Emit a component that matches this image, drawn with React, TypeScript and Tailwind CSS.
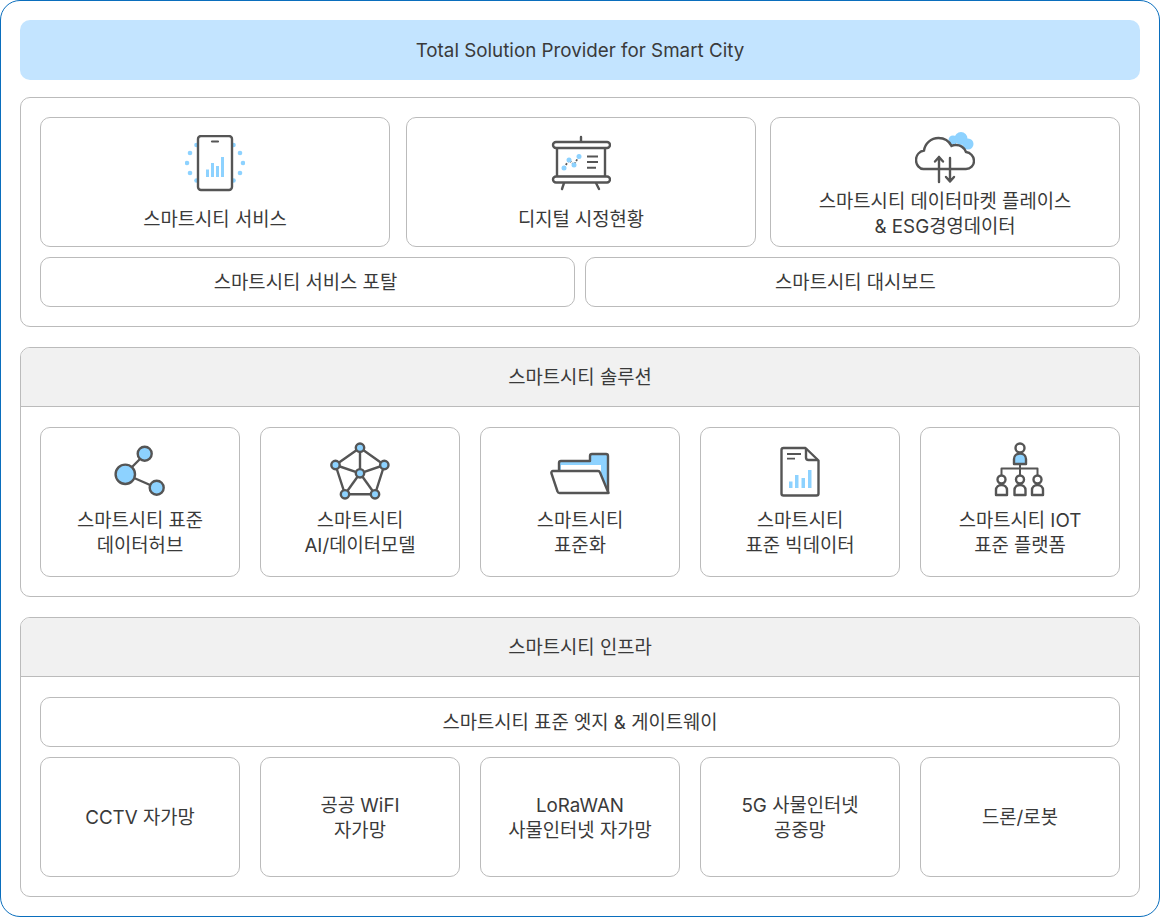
import React from "react";

const BLUE = "#8dd2ff";
const DARK = "#555555";

const PhoneIcon = () => (
  <svg viewBox="185 134 60 60" className="h-[60px] w-[60px]" fill="none">
    {[
      [196.5, 144],
      [190, 152],
      [187, 162],
      [190, 172],
      [196.5, 179.5],
      [233.5, 144],
      [240, 152],
      [243, 162],
      [240, 172],
      [233.5, 179.5],
    ].map(([cx, cy]) => (
      <circle key={`${cx}-${cy}`} cx={cx} cy={cy} r="2.3" fill={BLUE} />
    ))}
    <rect x="198" y="135" width="34" height="54" rx="3" fill="#fff" stroke={DARK} strokeWidth="2.4" />
    <path d="M212 140.5h6" stroke={DARK} strokeWidth="2.2" strokeLinecap="round" />
    <path d="M206 168.5h3V176h-3zM211 162h3v14h-3zM216 165h3v11h-3zM221 156h3v20h-3z" fill={BLUE} />
  </svg>
);

const BoardIcon = () => (
  <svg viewBox="551 134 60 60" className="h-[60px] w-[60px]" fill="none" stroke={DARK} strokeWidth="2.4">
    <path d="M581 136v5M564 182l-2 6M596 182l3 6" strokeLinecap="round" />
    <rect x="557" y="146" width="48" height="30" fill="#fff" />
    <rect x="553" y="141" width="57" height="6" rx="3" fill="#fff" />
    <rect x="553" y="175.5" width="57" height="6" rx="3" fill="#fff" />
    <path d="M564 167l5-8 5 5 5-9" strokeWidth="1.8" strokeDasharray="2 1.5" />
    <g fill={BLUE} stroke="none">
      <circle cx="564" cy="167" r="2.5" />
      <circle cx="569" cy="159" r="2.5" />
      <circle cx="574" cy="164" r="2.5" />
      <circle cx="579" cy="155.5" r="2.5" />
    </g>
    <path d="M587 155.5h11M587 161h11M587 166.7h9" strokeWidth="2" />
  </svg>
);

const CloudIcon = () => (
  <svg viewBox="915 129 60 60" className="h-[60px] w-[60px]" fill="none">
    <g fill={BLUE}>
      <circle cx="961" cy="138.5" r="6.5" />
      <circle cx="953" cy="140" r="4.5" />
      <circle cx="968" cy="144" r="5.5" />
    </g>
    <path
      d="M923 169h43c4.500 0 8-3.500 8-8s-3.500-8.500-8-9c-1.500-4.500-6-7.500-11-7-1.500 0-2.500.5-3.500 1-2.500-5-7.500-8-13-8-7.500 0-13.500 5.500-14.500 12.500-4.500 1-8 4.500-8 9.500 0 5 3.500 9 7.500 9z"
      fill="#fff"
      stroke={DARK}
      strokeWidth="2.4"
    />
    <path
      d="M939 182v-25M935 161.500l4-4.500 4 4.500M950 158v23.500M946 177l4 4.500 4-4.500"
      stroke={DARK}
      strokeWidth="2.4"
      strokeLinecap="round"
      strokeLinejoin="round"
    />
  </svg>
);

const ShareIcon = () => (
  <svg viewBox="110 442 60 60" className="h-[60px] w-[60px]" fill={BLUE} stroke={DARK} strokeWidth="2.4">
    <path d="M125 474l20-20M125 474l32 14" />
    <circle cx="125.300" cy="474.300" r="9.700" />
    <circle cx="144.700" cy="453.700" r="7" />
    <circle cx="156.700" cy="487.700" r="7" />
  </svg>
);

const NetworkIcon = () => {
  const center = [360, 473.3];
  const nodes = [
    [360, 447.7],
    [384.3, 465],
    [375, 494.3],
    [345, 494.3],
    [335.5, 465],
  ];
  return (
    <svg viewBox="330 442 60 60" className="h-[60px] w-[60px]" fill={BLUE} stroke={DARK} strokeWidth="2.4">
      <path d={`M${nodes.map((n) => n.join(" ")).join("L")}Z`} fill="none" />
      {nodes.map((n) => (
        <path key={n[0]} d={`M${center.join(" ")}L${n.join(" ")}`} fill="none" />
      ))}
      <circle cx={center[0]} cy={center[1]} r="4.200" />
      {nodes.map((n) => (
        <circle key={n[0]} cx={n[0]} cy={n[1]} r="4.200" />
      ))}
    </svg>
  );
};

const FolderIcon = () => (
  <svg viewBox="550 442 60 60" className="h-[60px] w-[60px]" fill="none" stroke={DARK} strokeWidth="2.4" strokeLinejoin="round">
    <path d="M559 472v-9c0-1.200.8-2 2-2h29v-5c0-1.200.8-2 2-2h14c1.200 0 2 .8 2 2v37h-49z" fill={BLUE} stroke="none" />
    <path d="M561 465h40v7h-40z" fill="#fff" stroke="none" />
    <path d="M559 471v-8c0-1.200.8-2 2-2h29v-5c0-1.200.8-2 2-2h14c1.200 0 2 .8 2 2v37" />
    <path d="M553 471h45c1 0 1.700.5 2 1.500l8.500 20.500h-49c-1 0-1.700-.5-2-1.500l-6-18c-.5-1.300.3-2.500 1.500-2.500z" fill="#fff" />
  </svg>
);

const DocIcon = () => (
  <svg viewBox="770 442 60 60" className="h-[60px] w-[60px]" fill="none" stroke={DARK} strokeWidth="2.4" strokeLinejoin="round">
    <path d="M783.500 448h22l13 12.500V493.500c0 1.200-.8 2-2 2h-33c-1.200 0-2-.8-2-2V450c0-1.200.8-2 2-2z" />
    <path d="M806 448.500v9c0 1.500.8 2.500 2.500 2.500h9.500" />
    <path d="M787 454h14M787 458.700h8" strokeWidth="1.800" />
    <path d="M789 481.500h3.500V488H789zM795 475h3.500v13H795zM801.500 478h3.500v10h-3.500zM808 470h3.500v18H808z" fill={BLUE} stroke="none" />
  </svg>
);

const PersonSmall = ({ x }: { x: number }) => (
  <g>
    <circle cx={x} cy="479.500" r="4" />
    <path d={`M${x - 5.500} 495v-5c0-3 2.500-5 5.500-5s5.500 2 5.500 5v5z`} />
  </g>
);

const TreeIcon = () => (
  <svg viewBox="990 442 60 60" className="h-[60px] w-[60px]" fill="none" stroke={DARK} strokeWidth="2.4" strokeLinejoin="round">
    <circle cx="1020" cy="448" r="4.500" />
    <path d="M1014 464v-5c0-3 2.500-5.500 6-5.500s6 2.500 6 5.500v5z" fill={BLUE} />
    <path d="M1020 464v4.500M1001.500 475v-6.500h36v6.500M1020 468.500v6.500" strokeWidth="2" />
    <PersonSmall x={1001.5} />
    <PersonSmall x={1020} />
    <PersonSmall x={1037.5} />
  </svg>
);

const Card = ({
  icon,
  lines,
  className,
}: {
  icon?: React.ReactNode;
  lines: string[];
  className: string;
}) => (
  <div className={`flex flex-col items-center justify-center rounded-[10px] border border-[#bbbbbb] text-center ${className}`}>
    {icon}
    <div>
      {lines.map((line) => (
        <p key={line}>{line}</p>
      ))}
    </div>
  </div>
);

const Header = ({ title }: { title: string }) => (
  <div className="flex h-[59px] items-center justify-center border-b border-[#bbbbbb] bg-[#f1f1f1]">{title}</div>
);

export default function App() {
  return (
    <div
      className="h-[917px] w-[1160px] overflow-hidden rounded-[20px] border border-[#0a6ebd] bg-white p-[19px] text-[18.8px] leading-[25px] text-[#3a3a3a]"
      style={{ fontFamily: 'Inter, "Noto Sans CJK KR", sans-serif' }}
    >
      <div className="flex h-[60px] items-center justify-center rounded-[10px] bg-[#c3e4ff]">
        Total Solution Provider for Smart City
      </div>

      <section className="mt-[17px] flex h-[230px] flex-col gap-[10px] rounded-[10px] border border-[#bbbbbb] p-[19px]">
        <div className="flex">
          <Card className="h-[130px] w-[350px] gap-3 pt-[2px]" icon={<PhoneIcon />} lines={["스마트시티 서비스"]} />
          <Card className="ml-4 h-[130px] w-[350px] gap-3 pt-[2px]" icon={<BoardIcon />} lines={["디지털 시정현황"]} />
          <Card className="ml-[14px] h-[130px] w-[350px] pt-1" icon={<CloudIcon />} lines={["스마트시티 데이터마켓 플레이스", "& ESG경영데이터"]} />
        </div>
        <div className="flex gap-[10px]">
          <Card className="h-[50px] w-[535px] pr-1" lines={["스마트시티 서비스 포탈"]} />
          <Card className="h-[50px] w-[535px] pl-[6px]" lines={["스마트시티 대시보드"]} />
        </div>
      </section>

      <section className="mt-5 h-[250px] overflow-hidden rounded-[10px] border border-[#bbbbbb]">
        <Header title="스마트시티 솔루션" />
        <div className="flex justify-between px-[19px] pt-5">
          <Card className="h-[150px] w-[200px] gap-[6px] pb-1" icon={<ShareIcon />} lines={["스마트시티 표준", "데이터허브"]} />
          <Card className="h-[150px] w-[200px] gap-[6px] pb-1" icon={<NetworkIcon />} lines={["스마트시티", "AI/데이터모델"]} />
          <Card className="h-[150px] w-[200px] gap-[6px] pb-1" icon={<FolderIcon />} lines={["스마트시티", "표준화"]} />
          <Card className="h-[150px] w-[200px] gap-[6px] pb-1" icon={<DocIcon />} lines={["스마트시티", "표준 빅데이터"]} />
          <Card className="h-[150px] w-[200px] gap-[6px] pb-1" icon={<TreeIcon />} lines={["스마트시티 IOT", "표준 플랫폼"]} />
        </div>
      </section>

      <section className="mt-5 h-[280px] overflow-hidden rounded-[10px] border border-[#bbbbbb]">
        <Header title="스마트시티 인프라" />
        <div className="flex flex-col gap-[10px] px-[19px] pt-5">
          <Card className="h-[50px]" lines={["스마트시티 표준 엣지 & 게이트웨이"]} />
          <div className="flex justify-between">
            <Card className="h-[120px] w-[200px]" lines={["CCTV 자가망"]} />
            <Card className="h-[120px] w-[200px] pt-[2px]" lines={["공공 WiFI", "자가망"]} />
            <Card className="h-[120px] w-[200px] pt-[2px]" lines={["LoRaWAN", "사물인터넷 자가망"]} />
            <Card className="h-[120px] w-[200px] pt-[2px]" lines={["5G 사물인터넷", "공중망"]} />
            <Card className="h-[120px] w-[200px]" lines={["드론/로봇"]} />
          </div>
        </div>
      </section>
    </div>
  );
}
